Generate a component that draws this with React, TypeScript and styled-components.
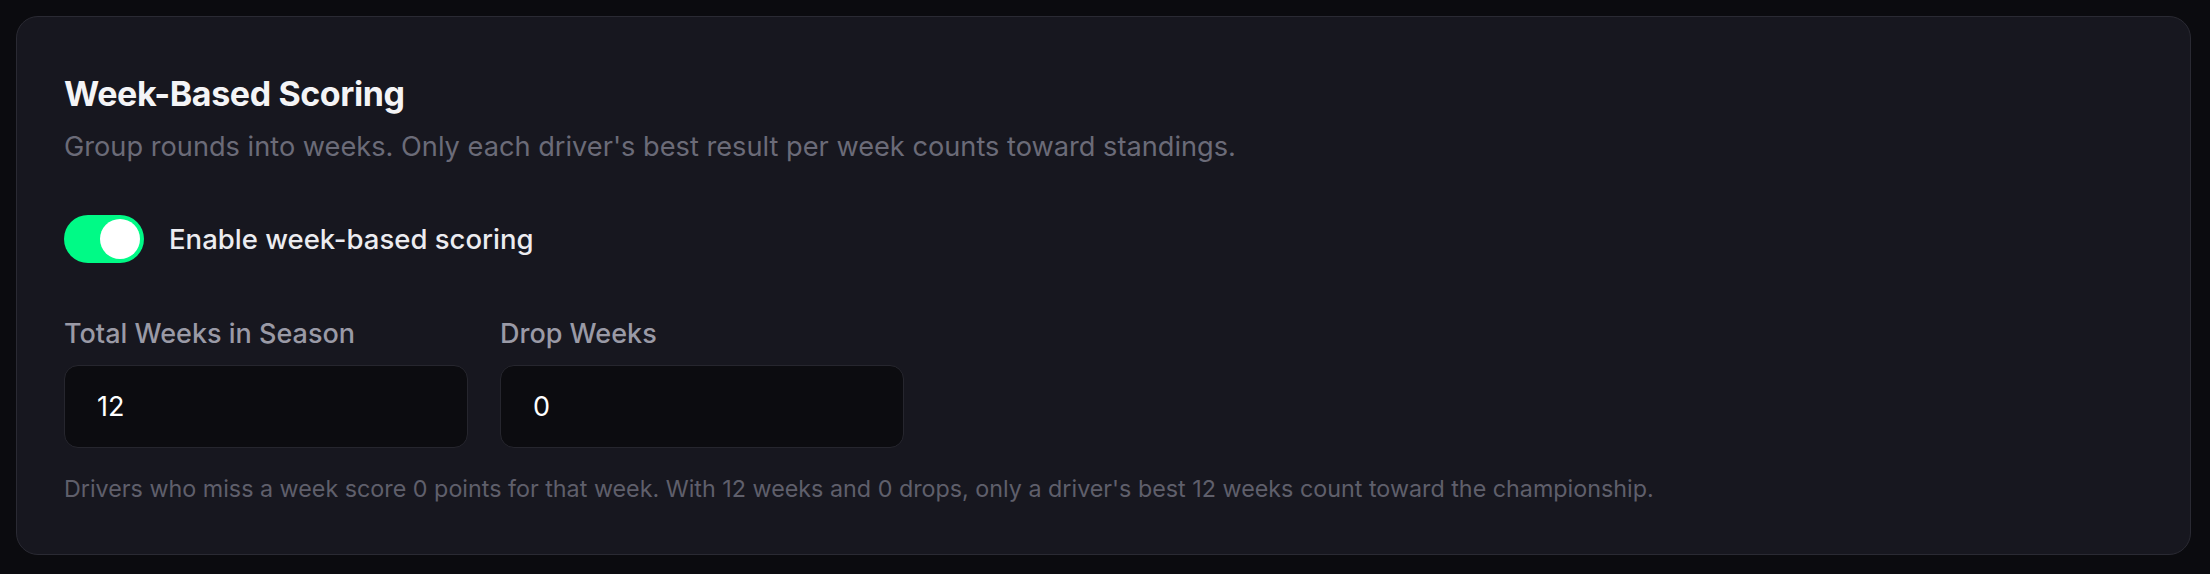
import styled, { createGlobalStyle } from 'styled-components';

const GlobalStyle = createGlobalStyle`
  html, body {
    margin: 0;
    padding: 0;
    background: #0b0b0f;
  }
  body {
    font-family: Inter, "Noto Sans", sans-serif;
    -webkit-font-smoothing: antialiased;
  }
`;

const Page = styled.div`
  padding: 16px 19px 20px 16px;
`;

const Card = styled.section`
  background: #17171f;
  border: 1px solid #2a2a33;
  border-radius: 22px;
  padding: 57px 50px 49px 47px;
`;

const Title = styled.h2`
  margin: 0;
  font-size: 34px;
  line-height: 40px;
  font-weight: 700;
  color: #f4f4f6;
  letter-spacing: -0.4px;
`;

const Description = styled.p`
  margin: 15px 0 0;
  font-size: 27.2px;
  line-height: 36px;
  color: #6b6b78;
`;

const ToggleRow = styled.label`
  display: flex;
  align-items: center;
  gap: 25px;
  margin-top: 50px;
  cursor: pointer;
`;

const Switch = styled.span<{ $on: boolean }>`
  display: flex;
  align-items: center;
  justify-content: ${(p) => (p.$on ? 'flex-end' : 'flex-start')};
  width: 80px;
  height: 48px;
  padding: 4px;
  box-sizing: border-box;
  border-radius: 24px;
  background: ${(p) => (p.$on ? '#00fa86' : '#3a3a44')};
`;

const Knob = styled.span`
  width: 40px;
  height: 40px;
  border-radius: 50%;
  background: #ffffff;
`;

const ToggleLabel = styled.span`
  font-size: 27.5px;
  font-weight: 500;
  color: #ececf0;
`;

const Fields = styled.div`
  display: flex;
  gap: 32px;
  margin-top: 54px;
`;

const Field = styled.div`
  display: flex;
  flex-direction: column;
  gap: 14px;
  width: 404px;
`;

const FieldLabel = styled.span`
  font-size: 27px;
  line-height: 34px;
  font-weight: 500;
  color: #9a9aa6;
`;

const Input = styled.input`
  height: 83px;
  box-sizing: border-box;
  background: #0c0c10;
  border: 1px solid #26262e;
  border-radius: 14px;
  padding: 0 32px;
  font-family: inherit;
  font-size: 27px;
  color: #ffffff;
  outline: none;
`;

const Note = styled.p`
  margin: 25px 0 0;
  font-size: 23.3px;
  line-height: 32px;
  color: #5f5f6b;
`;

export default function App() {
  return (
    <>
      <GlobalStyle />
      <Page>
        <Card>
          <Title>Week-Based Scoring</Title>
          <Description>
            Group rounds into weeks. Only each driver's best result per week counts toward standings.
          </Description>
          <ToggleRow>
            <Switch $on>
              <Knob />
            </Switch>
            <ToggleLabel>Enable week-based scoring</ToggleLabel>
          </ToggleRow>
          <Fields>
            <Field>
              <FieldLabel>Total Weeks in Season</FieldLabel>
              <Input type="text" defaultValue="12" />
            </Field>
            <Field>
              <FieldLabel>Drop Weeks</FieldLabel>
              <Input type="text" defaultValue="0" />
            </Field>
          </Fields>
          <Note>
            Drivers who miss a week score 0 points for that week. With 12 weeks and 0 drops, only a
            driver's best 12 weeks count toward the championship.
          </Note>
        </Card>
      </Page>
    </>
  );
}
